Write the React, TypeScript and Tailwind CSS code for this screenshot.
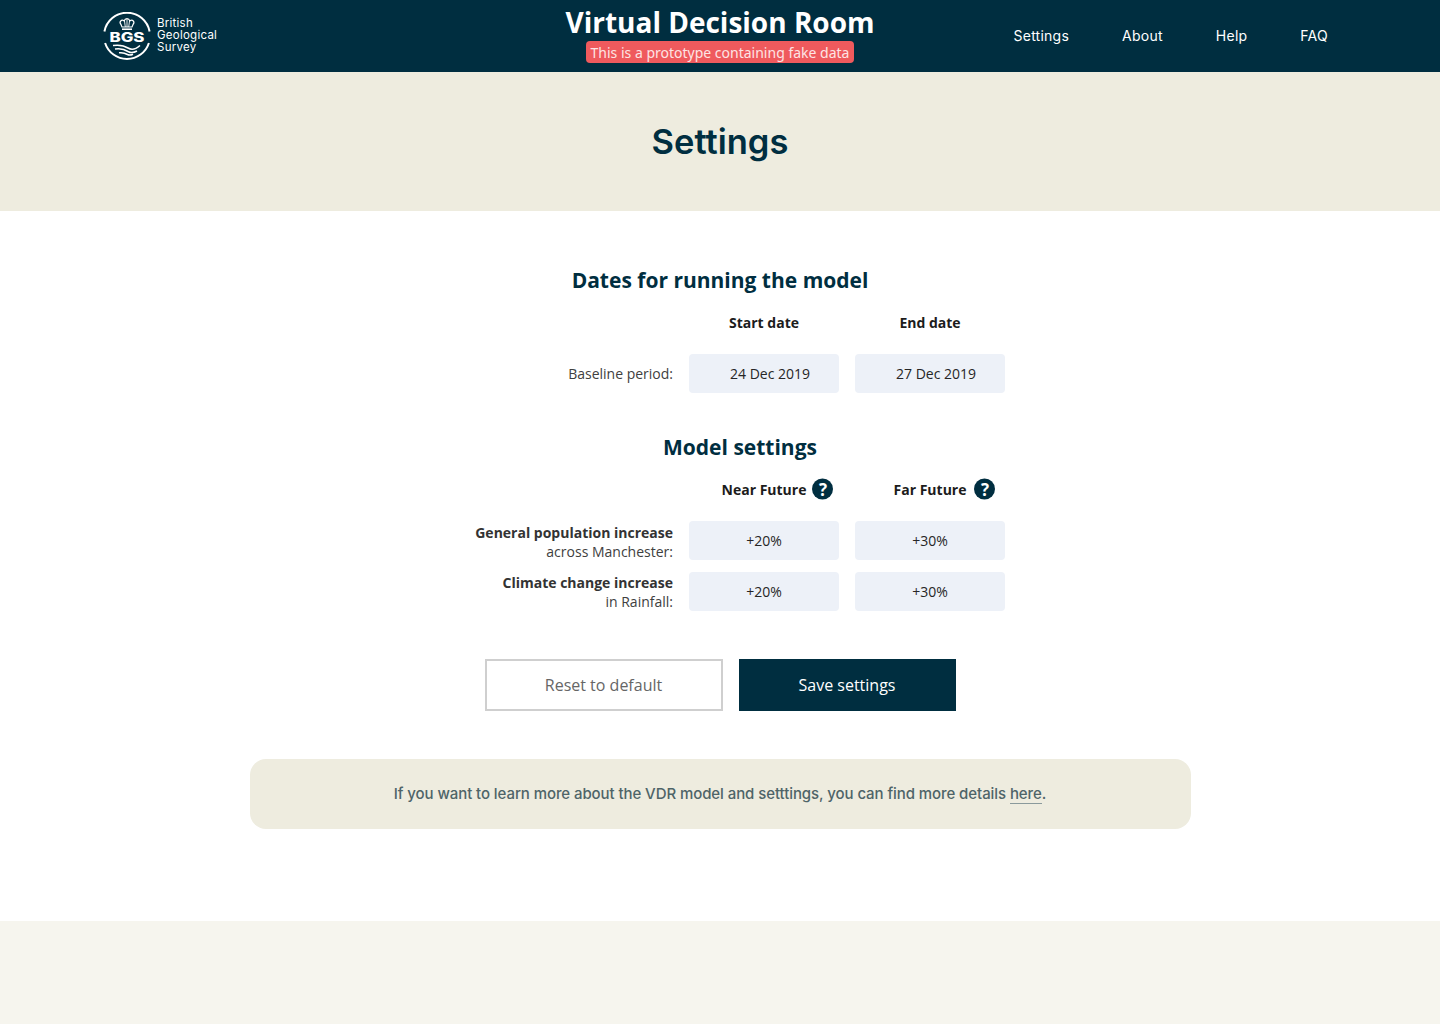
const navItems = ['Settings', 'About', 'Help', 'FAQ'];

function Logo() {
  return (
    <div className="flex items-center gap-[6px]">
      <svg width="48" height="48" viewBox="0 0 48 48" fill="none">
        {/* ring, broken where the BGS letters cross it */}
        <path d="M1.400 19.500A23 23 0 0 1 46.600 19.500" stroke="#fff" strokeWidth="2" />
        <path d="M2.100 31A23 23 0 0 0 45.900 31" stroke="#fff" strokeWidth="2" />
        {/* crown */}
        <path
          d="M18 12.500c-2.400-2.800.6-5.400 3.200-3.600.4-1.400 1.700-2.300 2.800-2.300s2.400.9 2.800 2.300c2.600-1.800 5.600.8 3.200 3.600l-1 2.500h-10z"
          stroke="#fff"
          strokeWidth="1.200"
        />
        <path d="M19 17.200h10" stroke="#fff" strokeWidth="1.600" />
        <path d="M24 7v8M21.500 9l.8 6M26.500 9l-.8 6" stroke="#fff" strokeWidth="0.900" />
        <text
          x="24"
          y="30"
          textAnchor="middle"
          fill="#fff"
          fontSize="12.500"
          fontWeight="800"
          fontFamily="Inter, sans-serif"
          textLength="35"
          lengthAdjust="spacingAndGlyphs"
        >
          BGS
        </text>
        {/* land */}
        <path d="M10 33.500c6-.8 11.500.2 15 2.500 3 2 7 2 12-2.500" stroke="#fff" strokeWidth="1.500" />
        <path d="M12 37c5-.8 9.500.2 13 2.500 2.500 1.500 5.500 1.500 9-.5" stroke="#fff" strokeWidth="1.500" />
        <path d="M16 40.800c3.500-.5 6 .2 8.500 1.700 1.500.8 3.500.6 5.500-.3" stroke="#fff" strokeWidth="1.500" />
      </svg>
      <div className="-mt-[3px] font-['Inter',sans-serif] text-[11.500px] leading-[12px] tracking-[0.25px] text-white">
        <div>British</div>
        <div>Geological</div>
        <div>Survey</div>
      </div>
    </div>
  );
}

function QuestionIcon({ className = 'ml-[6px]' }: { className?: string }) {
  return (
    <span
      className={`absolute left-full top-1/2 flex h-[21px] w-[21px] -translate-y-1/2 items-center justify-center rounded-full bg-[#002e40] text-[17px] font-bold leading-none text-white ${className}`}
    >
      ?
    </span>
  );
}

function Field({ children, className = '' }: { children: React.ReactNode; className?: string }) {
  return (
    <div
      className={`flex h-[39px] items-center justify-center rounded-[4px] bg-[#edf1f8] text-[14px] text-[#262626] ${className}`}
    >
      {children}
    </div>
  );
}

function ColumnHead({ children }: { children: React.ReactNode }) {
  return (
    <div className="flex h-[20px] items-center justify-center text-[14px] font-bold text-[#1c1c1c]">
      {children}
    </div>
  );
}

function RowLabel({ strong, rest, className = '' }: { strong: string; rest: string; className?: string }) {
  return (
    <div className={`h-[39px] text-right text-[14px] leading-[19px] text-[#404040] ${className}`}>
      <div className="font-bold text-[#333333]">{strong}</div>
      <div>{rest}</div>
    </div>
  );
}

export default function App() {
  return (
    <div className="flex min-h-[1024px] flex-col bg-white font-['Open_Sans',sans-serif]">
      <header className="grid h-[72px] grid-cols-[1fr_auto_1fr] items-center bg-[#002e40] px-[103px]">
        <Logo />
        <div className="flex flex-col items-center">
          <h1 className="mt-[2px] text-[28px] font-bold leading-[38px] text-white">Virtual Decision Room</h1>
          <span className="flex h-[22px] w-[268px] items-center justify-center rounded-[4px] bg-[#ef5a5d] font-['Noto_Sans',sans-serif] text-[14px] text-[#fde4e4]">
            This is a prototype containing fake data
          </span>
          <div className="h-[8px]" />
        </div>
        <nav className="flex items-center justify-end gap-[53px] pb-[1px] pr-[9px] font-['Inter',sans-serif] text-[14px] tracking-[0.25px] text-white">
          {navItems.map((item) => (
            <a key={item} href="#">
              {item}
            </a>
          ))}
        </nav>
      </header>

      <section className="flex h-[139px] items-center justify-center bg-[#eeecdf]">
        <h2 className="font-['Inter',sans-serif] text-[34.500px] font-semibold leading-[46px] text-[#002e40]">
          Settings
        </h2>
      </section>

      <main className="flex h-[710px] flex-col items-center pt-[54px]">
        <h3 className="h-[30px] text-[21px] font-bold leading-[30px] text-[#002e40]">
          Dates for running the model
        </h3>
        <div className="mt-[17px] grid w-[570px] grid-cols-[238px_150px_150px] items-center gap-x-[16px]">
          <div />
          <ColumnHead>Start date</ColumnHead>
          <ColumnHead>End date</ColumnHead>
          <div className="col-span-3 h-[22px]" />
          <div className="text-right text-[14px] text-[#404040]">Baseline period:</div>
          <Field className="pl-[12px]">24 Dec 2019</Field>
          <Field className="pl-[12px]">27 Dec 2019</Field>
        </div>

        <h3 className="mt-[39px] h-[30px] pl-[40px] text-[21px] font-bold leading-[30px] text-[#002e40]">
          Model settings
        </h3>
        <div className="mt-[17px] grid w-[570px] grid-cols-[238px_150px_150px] items-center gap-x-[16px]">
          <div />
          <ColumnHead>
            <span className="relative">
              Near Future
              <QuestionIcon />
            </span>
          </ColumnHead>
          <ColumnHead>
            <span className="relative">
              Far Future
              <QuestionIcon className="ml-[8px]" />
            </span>
          </ColumnHead>
          <div className="col-span-3 h-[22px]" />
          <RowLabel strong="General population increase" rest="across Manchester:" className="pt-[2px]" />
          <Field>+20%</Field>
          <Field>+30%</Field>
          <div className="col-span-3 h-[12px]" />
          <RowLabel strong="Climate change increase" rest="in Rainfall:" className="pt-[1px]" />
          <Field>+20%</Field>
          <Field>+30%</Field>
        </div>

        <div className="mt-[48px] flex gap-[16px]">
          <button className="h-[52px] w-[238px] border-2 border-[#cfcfcf] bg-white text-[16px] text-[#666666]">
            Reset to default
          </button>
          <button className="h-[52px] w-[217px] bg-[#002e40] text-[16px] text-white">Save settings</button>
        </div>

        <div className="mt-[48px] flex h-[70px] w-[941px] items-center justify-center rounded-[16px] bg-[#eeecdf] font-['Inter',sans-serif] text-[15px] font-medium tracking-[-0.08px] text-[#4e6468]">
          <p>
            If you want to learn more about the VDR model and setttings, you can find more details{' '}
            <a href="#" className="border-b-[1.5px] border-[#8a9a9c] leading-[16px]">
              here
            </a>
            .
          </p>
        </div>
      </main>

      <footer className="h-[103px] bg-[#f6f5ee]" />
    </div>
  );
}
